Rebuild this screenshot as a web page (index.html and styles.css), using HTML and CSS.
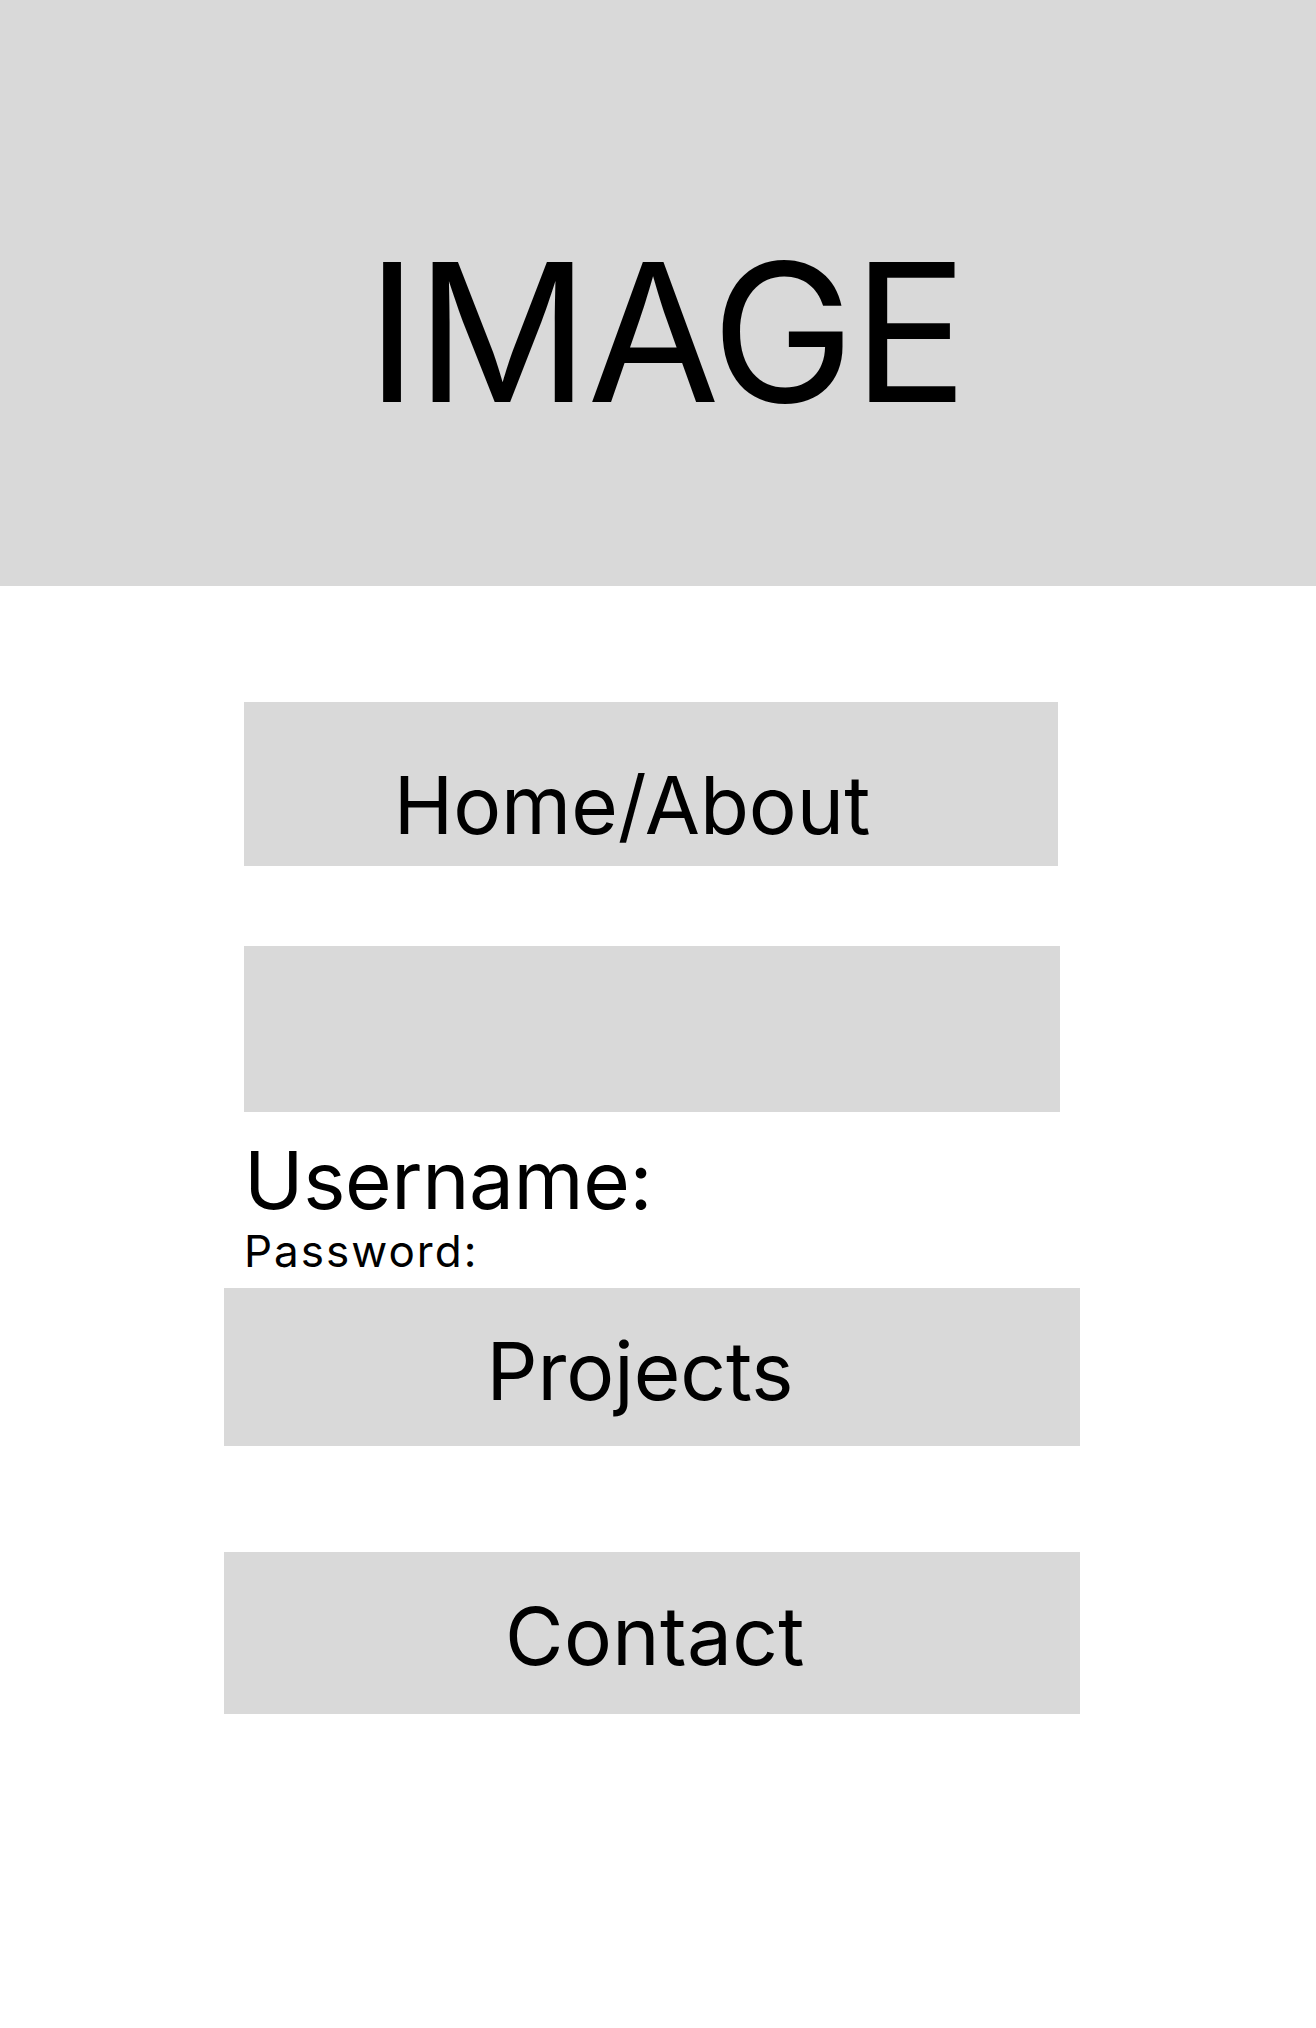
FILE: index.html
```html
<!DOCTYPE html>
<html lang="en">
<head>
  <meta charset="UTF-8" />
  <meta name="viewport" content="width=device-width, initial-scale=1" />
  <title>Portfolio</title>
  <link rel="stylesheet" href="styles.css">
</head>
<body>

  <header class="hero">
    <h1 class="hero-text">IMAGE</h1>
  </header>

  <main class="menu">
    <a class="nav-box home-box" href="#">Home/About</a>
    <div class="login-box"></div>

    <form class="login-form">
      <label class="user-label">Username:</label>
      <label class="pass-label">Password:</label>
    </form>

    <a class="nav-box projects-box" href="#">Projects</a>
    <a class="nav-box contact-box" href="#">Contact</a>
  </main>

</body>
</html>
```

FILE: styles.css
```css
body {
  margin: 0;
  background: #fff;
  color: #000;
  font-family: Inter, "Noto Sans", sans-serif;
}
.hero {
  background: #d9d9d9;
  height: 586px;
  padding-top: 236px;
  box-sizing: border-box;
}
.hero-text {
  margin: 0;
  font-size: 192px;
  font-weight: 400;
  line-height: 1;
  letter-spacing: -2px;
  text-align: center;
  padding-left: 16px;
}
.menu {
  padding: 116px 0 0 224px;
  display: flex;
  flex-direction: column;
  align-items: flex-start;
}
.nav-box {
  display: block;
  box-sizing: border-box;
  background: #d9d9d9;
  color: #000;
  text-decoration: none;
  font-size: 80px;
  line-height: 1;
  text-align: center;
}
.home-box {
  margin-left: 20px;
  width: 814px;
  height: 164px;
  padding: 63px 38px 0 0;
}
.login-box {
  margin: 80px 0 0 20px;
  width: 816px;
  height: 166px;
  background: #d9d9d9;
}
.login-form {
  margin: 28px 0 0 20px;
  display: flex;
  flex-direction: column;
}
.user-label {
  font-size: 80px;
  line-height: 1;
  letter-spacing: -0.4px;
}
.pass-label {
  margin-top: 9px;
  font-size: 44px;
  line-height: 1;
  letter-spacing: 2px;
}
.projects-box {
  margin-top: 15px;
  width: 856px;
  height: 158px;
  padding: 43px 24px 0 0;
}
.contact-box {
  margin-top: 106px;
  width: 856px;
  height: 162px;
  padding: 44px 0 0 6px;
  letter-spacing: 0.4px;
}
```
